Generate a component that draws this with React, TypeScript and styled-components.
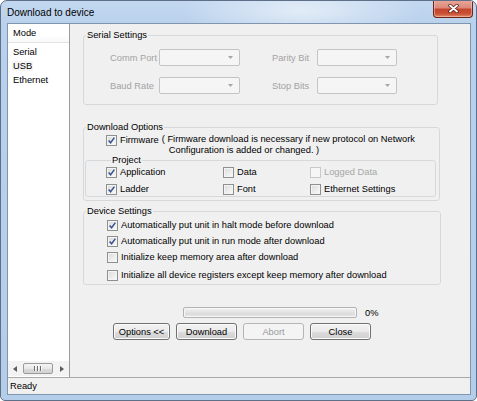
import React from "react";
import styled, { createGlobalStyle } from "styled-components";

const FONT = `"Liberation Sans", Arial, sans-serif`;

const GlobalStyle = createGlobalStyle`
  html, body { margin: 0; padding: 0; background: #ffffff; }
  body { font-family: ${FONT}; font-size: 9.3px; color: #000; }
`;

const Window = styled.div`
  width: 477px;
  height: 401px;
  box-sizing: border-box;
  border: 1px solid #5d7087;
  border-radius: 7px 7px 5px 5px;
  background:
    radial-gradient(ellipse 120px 30px at 300px 10px, rgba(255, 255, 255, 0.55), rgba(255, 255, 255, 0) 100%),
    linear-gradient(to bottom, #c3d8f0 0px, #b9d1ec 24px, #b4cde9 100%);
  display: flex;
  flex-direction: column;
  overflow: hidden;
`;

const TitleBar = styled.div`
  height: 22px;
  flex: none;
  display: flex;
  align-items: center;
  padding-left: 6px;
`;

const Title = styled.div`
  flex: 1;
  font-size: 10px;
  color: #000;
`;

const CloseButton = styled.div`
  align-self: flex-start;
  margin-top: -1px;
  margin-right: 3px;
  width: 40px;
  height: 18px;
  box-sizing: border-box;
  border: 1px solid #6d2419;
  border-top: none;
  border-radius: 0 0 4px 4px;
  background: linear-gradient(to bottom, #e9a99b 0%, #dc8a79 45%, #c5452e 55%, #c94f35 80%, #e08a6a 100%);
  box-shadow: inset 0 0 0 1px rgba(255, 220, 210, 0.45);
  display: flex;
  align-items: center;
  justify-content: center;
`;

const Client = styled.div`
  margin: 0 5px 0 6px;
  height: 372px;
  box-sizing: border-box;
  border: 1px solid #8096ae;
  display: flex;
  flex-direction: column;
  background: #f0f0f0;
`;

const Body = styled.div`
  flex: 1;
  display: flex;
  min-height: 0;
`;

const ModePanel = styled.div`
  width: 62px;
  flex: none;
  box-sizing: border-box;
  border-right: 1px solid #9c9c9c;
  background: #ffffff;
  display: flex;
  flex-direction: column;
`;

const ModeHeader = styled.div`
  height: 19px;
  box-sizing: border-box;
  border-bottom: 1px solid #e3e3e3;
  padding-left: 5px;
  display: flex;
  align-items: center;
  background: linear-gradient(to bottom, #ffffff 0%, #ffffff 60%, #f7f8f9 100%);
`;

const ModeList = styled.div`
  flex: 1;
  padding-top: 2px;
`;

const ModeItem = styled.div<{ $focused?: boolean }>`
  height: 14px;
  display: flex;
  align-items: center;
  padding-left: 5px;
  span {
    padding: 0 1px;
    margin-left: -1px;
    background: ${(p) => (p.$focused ? "#f4f4f4" : "transparent")};
  }
`;

const HScroll = styled.div`
  height: 15px;
  margin-bottom: 1px;
  display: flex;
  align-items: center;
  background: #f3f3f3;
`;

const ScrollArrow = styled.div`
  width: 14px;
  height: 14px;
  flex: none;
  display: flex;
  align-items: center;
  justify-content: center;
`;

const ScrollTrack = styled.div`
  flex: 1;
  display: flex;
  align-items: center;
`;

const ScrollThumb = styled.div`
  width: 30px;
  height: 11px;
  margin-left: 1px;
  box-sizing: border-box;
  border: 1px solid #9b9b9b;
  border-radius: 2px;
  background: linear-gradient(to bottom, #f5f5f5 0%, #e8e8e8 50%, #d9d9d9 51%, #d3d3d3 100%);
  display: flex;
  align-items: center;
  justify-content: center;
  gap: 1px;
`;

const Grip = styled.span`
  width: 1px;
  height: 5px;
  background: #6c6c6c;
  box-shadow: 1px 0 0 #fafafa;
  margin-right: 1px;
`;

const Pane = styled.div`
  flex: 1;
  padding: 5px 0 0 13px;
  display: flex;
  flex-direction: column;
`;

const Group = styled.fieldset<{ $width: number; $top?: number }>`
  width: ${(p) => p.$width}px;
  box-sizing: border-box;
  min-width: 0;
  margin: ${(p) => p.$top ?? 0}px 0 0 0;
  padding: 0;
  border: 1px solid #d5d9dc;
  border-radius: 3px;
`;

const InnerGroup = styled.fieldset`
  min-width: 0;
  margin: -2px 3px 0 1px;
  padding: 0 0 1px 20px;
  border: 1px solid #d5d9dc;
  border-radius: 3px;
`;

const Legend = styled.legend<{ $indent: number }>`
  margin-left: ${(p) => p.$indent}px;
  padding: 0 1px;
  line-height: 12px;
  color: #000;
`;

const SerialRows = styled.div`
  padding: 8px 0 10px 26px;
  display: flex;
  flex-direction: column;
  gap: 11px;
`;

const FieldRow = styled.div`
  display: flex;
  align-items: center;
  height: 17px;
`;

const FieldLabel = styled.span<{ $width: number; $gap?: number }>`
  width: ${(p) => p.$width}px;
  margin-left: ${(p) => p.$gap ?? 0}px;
  color: #a3a3a3;
  flex: none;
`;

const Combo = styled.div<{ $width: number }>`
  width: ${(p) => p.$width}px;
  height: 17px;
  box-sizing: border-box;
  border: 1px solid #c2c5c8;
  border-radius: 2px;
  background: #f5f5f5;
  display: flex;
  align-items: center;
  justify-content: flex-end;
  padding-right: 6px;
  flex: none;
`;

const OptionsBody = styled.div`
  padding: 1px 0 3px 0;
`;

const FirmwareRow = styled.div`
  display: flex;
  align-items: flex-start;
  padding-left: 22px;
  line-height: 11px;
`;

const Note = styled.div`
  margin-left: 3px;
  span {
    display: block;
  }
  span + span {
    padding-left: 7px;
  }
`;

const ProjectGrid = styled.div`
  display: grid;
  grid-template-columns: 117px 87px 1fr;
  row-gap: 5px;
`;

const DeviceRows = styled.div`
  padding: 2px 0 3px 23px;
  display: flex;
  flex-direction: column;
  gap: 4px;
`;

const CheckRow = styled.label<{ $disabled?: boolean; $gap?: number }>`
  display: flex;
  align-items: center;
  height: 12px;
  gap: 3px;
  margin-top: ${(p) => p.$gap ?? 0}px;
  color: ${(p) => (p.$disabled ? "#a6a6a6" : "#000")};
  white-space: nowrap;
`;

const Box = styled.span<{ $disabled?: boolean }>`
  width: 11px;
  height: 11px;
  flex: none;
  box-sizing: border-box;
  border: 1px solid ${(p) => (p.$disabled ? "#c9c9c9" : "#8e8f8f")};
  background: ${(p) =>
    p.$disabled
      ? "#f6f6f6"
      : "linear-gradient(135deg, #d9d9d9 0%, #ececec 55%, #fbfbfb 100%)"};
  box-shadow: inset 0 0 0 1px ${(p) => (p.$disabled ? "#f6f6f6" : "#f4f4f4")};
  display: flex;
  align-items: center;
  justify-content: center;
`;

const BottomArea = styled.div`
  margin-top: 22px;
  display: flex;
  flex-direction: column;
  gap: 5px;
`;

const ProgressRow = styled.div`
  display: flex;
  align-items: center;
  padding-left: 100px;
  gap: 8px;
`;

const ProgressBar = styled.div`
  width: 174px;
  height: 11px;
  box-sizing: border-box;
  border: 1px solid #b2b2b2;
  border-radius: 2px;
  background: linear-gradient(to bottom, #f2f2f2 0%, #e2e2e2 50%, #dadada 55%, #e6e6e6 100%);
  box-shadow: inset 0 0 0 1px #f7f7f7;
`;

const ButtonRow = styled.div`
  display: flex;
  padding-left: 30px;
  gap: 6px;
`;

const Button = styled.button<{ $width: number }>`
  width: ${(p) => p.$width}px;
  height: 17px;
  box-sizing: border-box;
  padding: 0;
  border: 1px solid #707070;
  border-radius: 3px;
  background: linear-gradient(to bottom, #f2f2f2 0%, #ebebeb 50%, #dddddd 51%, #cfcfcf 100%);
  box-shadow: inset 0 0 0 1px #fbfbfb;
  font-family: ${FONT};
  font-size: 9.3px;
  color: #000;
  &:disabled {
    border-color: #b3b6b9;
    background: #f4f4f4;
    box-shadow: none;
    color: #9a9a9a;
  }
`;

const StatusBar = styled.div`
  height: 17px;
  flex: none;
  box-sizing: border-box;
  border-top: 1px solid #a9a9a9;
  padding-left: 2px;
  display: flex;
  align-items: center;
  background: #f0f0f0;
`;

const CheckMark = () => (
  <svg width="9" height="9" viewBox="0 0 9 9">
    <path d="M1.6 4.4 L3.6 6.7 L7.4 1.6" fill="none" stroke="#3b5590" strokeWidth="1.5" />
  </svg>
);

const Check: React.FC<{
  checked?: boolean;
  disabled?: boolean;
  gap?: number;
  children: React.ReactNode;
}> = ({ checked, disabled, gap, children }) => (
  <CheckRow $disabled={disabled} $gap={gap}>
    <Box $disabled={disabled}>{checked && <CheckMark />}</Box>
    <span>{children}</span>
  </CheckRow>
);

const ComboArrow = () => (
  <svg width="5" height="3" viewBox="0 0 5 3">
    <path d="M0 0 H5 L2.5 3 Z" fill="#a6a6a6" />
  </svg>
);

const Arrow: React.FC<{ dir: "left" | "right" }> = ({ dir }) => (
  <svg width="4" height="6" viewBox="0 0 4 6">
    <path d={dir === "left" ? "M4 0 V6 L0 3 Z" : "M0 0 V6 L4 3 Z"} fill="#5d5d5d" />
  </svg>
);

export default function App() {
  return (
    <>
      <GlobalStyle />
      <Window>
        <TitleBar>
          <Title>Download to device</Title>
          <CloseButton>
            <svg width="11" height="9" viewBox="0 0 11 9">
              <path d="M2 1.5 L9 7.5 M9 1.5 L2 7.5" stroke="#5a1c14" strokeWidth="3.4" strokeLinecap="round" />
              <path d="M2 1.5 L9 7.5 M9 1.5 L2 7.5" stroke="#ffffff" strokeWidth="1.9" strokeLinecap="round" />
            </svg>
          </CloseButton>
        </TitleBar>
        <Client>
          <Body>
            <ModePanel>
              <ModeHeader>Mode</ModeHeader>
              <ModeList>
                <ModeItem><span>Serial</span></ModeItem>
                <ModeItem $focused><span>USB</span></ModeItem>
                <ModeItem><span>Ethernet</span></ModeItem>
              </ModeList>
              <HScroll>
                <ScrollArrow><Arrow dir="left" /></ScrollArrow>
                <ScrollTrack>
                  <ScrollThumb>
                    <Grip />
                    <Grip />
                    <Grip />
                  </ScrollThumb>
                </ScrollTrack>
                <ScrollArrow><Arrow dir="right" /></ScrollArrow>
              </HScroll>
            </ModePanel>
            <Pane>
              <Group $width={355}>
                <Legend $indent={2}>Serial Settings</Legend>
                <SerialRows>
                  <FieldRow>
                    <FieldLabel $width={49}>Comm Port</FieldLabel>
                    <Combo $width={81}><ComboArrow /></Combo>
                    <FieldLabel $width={45} $gap={32}>Parity Bit</FieldLabel>
                    <Combo $width={80}><ComboArrow /></Combo>
                  </FieldRow>
                  <FieldRow>
                    <FieldLabel $width={49}>Baud Rate</FieldLabel>
                    <Combo $width={81}><ComboArrow /></Combo>
                    <FieldLabel $width={45} $gap={32}>Stop Bits</FieldLabel>
                    <Combo $width={80}><ComboArrow /></Combo>
                  </FieldRow>
                </SerialRows>
              </Group>

              <Group $width={357} $top={16}>
                <Legend $indent={2}>Download Options</Legend>
                <OptionsBody>
                  <FirmwareRow>
                    <Check checked>Firmware</Check>
                    <Note>
                      <span>( Firmware download is necessary if new protocol on Network</span>
                      <span>Configuration is added or changed. )</span>
                    </Note>
                  </FirmwareRow>
                  <InnerGroup>
                    <Legend $indent={5}>Project</Legend>
                    <ProjectGrid>
                      <Check checked>Application</Check>
                      <Check>Data</Check>
                      <Check disabled>Logged Data</Check>
                      <Check checked>Ladder</Check>
                      <Check>Font</Check>
                      <Check>Ethernet Settings</Check>
                    </ProjectGrid>
                  </InnerGroup>
                </OptionsBody>
              </Group>

              <Group $width={358} $top={4}>
                <Legend $indent={2}>Device Settings</Legend>
                <DeviceRows>
                  <Check checked>Automatically put unit in halt mode before download</Check>
                  <Check checked>Automatically put unit in run mode after download</Check>
                  <Check>Initialize keep memory area after download</Check>
                  <Check gap={2}>Initialize all device registers except keep memory after download</Check>
                </DeviceRows>
              </Group>

              <BottomArea>
                <ProgressRow>
                  <ProgressBar />
                  <span>0%</span>
                </ProgressRow>
                <ButtonRow>
                  <Button $width={57}>Options &lt;&lt;</Button>
                  <Button $width={61}>Download</Button>
                  <Button $width={61} disabled>Abort</Button>
                  <Button $width={61}>Close</Button>
                </ButtonRow>
              </BottomArea>
            </Pane>
          </Body>
          <StatusBar>Ready</StatusBar>
        </Client>
      </Window>
    </>
  );
}
